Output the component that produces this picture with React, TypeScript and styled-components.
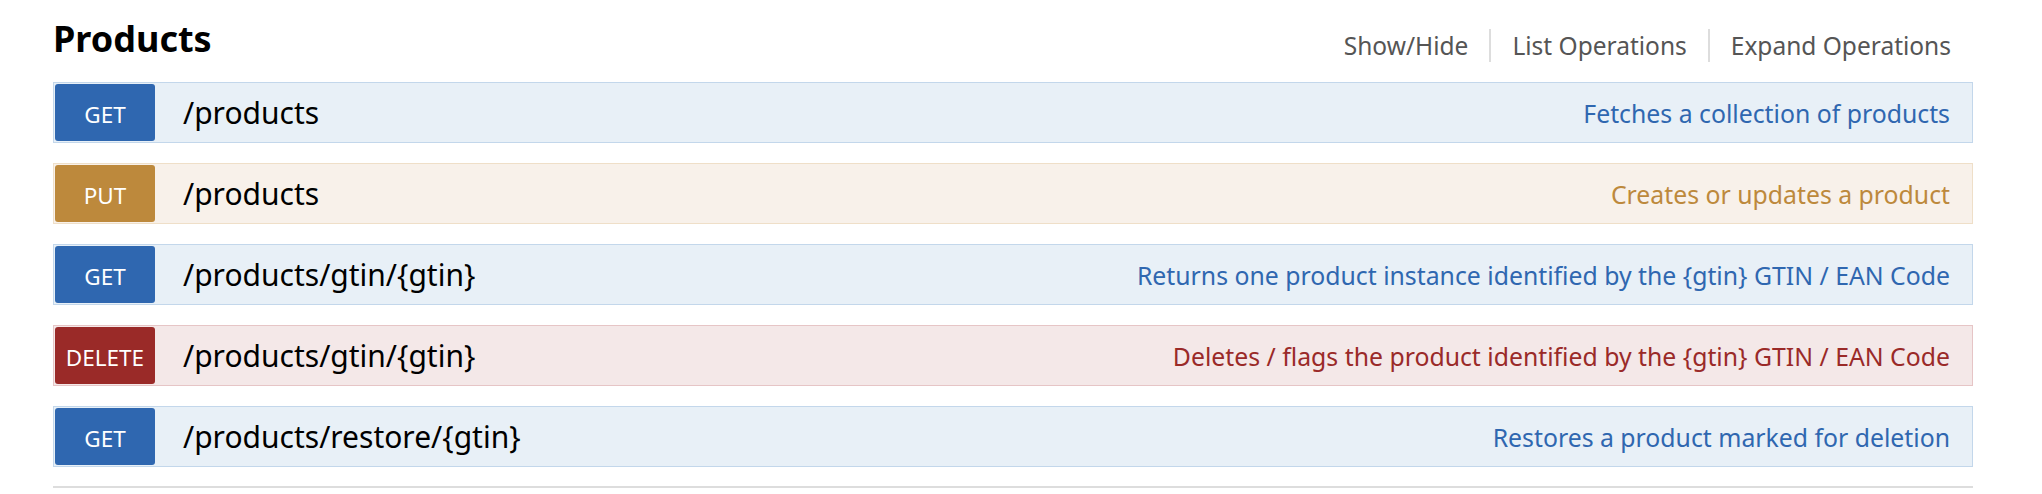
import React from 'react';
import styled, { createGlobalStyle } from 'styled-components';

type Method = 'get' | 'put' | 'delete';

const palette: Record<Method, { badge: string; bg: string; border: string; text: string }> = {
  get: { badge: '#2f67b0', bg: '#e8f0f7', border: '#c3d7eb', text: '#2f67b0' },
  put: { badge: '#bd893c', bg: '#f8f1ea', border: '#efdfc8', text: '#bd893c' },
  delete: { badge: '#9a2a28', bg: '#f4e8e8', border: '#e6c5c6', text: '#9a2a28' },
};

const operations: { method: Method; path: string; summary: string }[] = [
  { method: 'get', path: '/products', summary: 'Fetches a collection of products' },
  { method: 'put', path: '/products', summary: 'Creates or updates a product' },
  {
    method: 'get',
    path: '/products/gtin/{gtin}',
    summary: 'Returns one product instance identified by the {gtin} GTIN / EAN Code',
  },
  {
    method: 'delete',
    path: '/products/gtin/{gtin}',
    summary: 'Deletes / flags the product identified by the {gtin} GTIN / EAN Code',
  },
  { method: 'get', path: '/products/restore/{gtin}', summary: 'Restores a product marked for deletion' },
];

const GlobalStyle = createGlobalStyle`
  html, body {
    margin: 0;
    padding: 0;
    background: #ffffff;
    font-family: "Noto Sans", "Open Sans", sans-serif;
  }
`;

const Resource = styled.section`
  box-sizing: border-box;
  width: 1920px;
  margin-left: 53px;
  padding-top: 21px;
  padding-bottom: 19px;
  border-bottom: 2px solid #dddddd;
`;

const Heading = styled.div`
  display: flex;
  align-items: flex-start;
  justify-content: space-between;
  height: 41px;
  margin-bottom: 20px;
`;

const Title = styled.h2`
  margin: 0;
  font-size: 36px;
  line-height: 36px;
  font-weight: 700;
  color: #000000;
`;

const Options = styled.ul`
  list-style: none;
  margin: 8px 0 0;
  padding: 0 22px 0 0;
  display: flex;
`;

const Option = styled.li<{ $last?: boolean }>`
  padding: 0 21px;
  font-size: 24.5px;
  line-height: 33px;
  color: #555555;
  border-right: ${(p) => (p.$last ? 'none' : '2px solid #dddddd')};

  &:last-child {
    padding-right: 0;
  }
`;

const Operations = styled.ul`
  list-style: none;
  margin: 0;
  padding: 0;
  display: flex;
  flex-direction: column;
  gap: 20px;
`;

const Operation = styled.li<{ $method: Method }>`
  box-sizing: border-box;
  height: 61px;
  padding: 1px;
  display: flex;
  align-items: center;
  background: ${(p) => palette[p.$method].bg};
  border: 1px solid ${(p) => palette[p.$method].border};
`;

const Badge = styled.span<{ $method: Method }>`
  flex: none;
  box-sizing: border-box;
  width: 100px;
  height: 57px;
  padding-top: 3px;
  display: flex;
  align-items: center;
  justify-content: center;
  border-radius: 3px;
  background: ${(p) => palette[p.$method].badge};
  color: #ffffff;
  font-size: 22.5px;
  text-transform: uppercase;
`;

const Path = styled.span`
  margin-left: 28px;
  font-size: 30px;
  color: #000000;
  white-space: nowrap;
`;

const Summary = styled.span<{ $method: Method }>`
  flex: 1;
  text-align: right;
  padding-right: 21px;
  font-size: 24.8px;
  color: ${(p) => palette[p.$method].text};
  white-space: nowrap;
`;

function App() {
  return (
    <>
      <GlobalStyle />
      <Resource>
        <Heading>
          <Title>Products</Title>
          <Options>
            <Option>Show/Hide</Option>
            <Option>List Operations</Option>
            <Option $last>Expand Operations</Option>
          </Options>
        </Heading>
        <Operations>
          {operations.map((op, i) => (
            <Operation key={i} $method={op.method}>
              <Badge $method={op.method}>{op.method}</Badge>
              <Path>{op.path}</Path>
              <Summary $method={op.method}>{op.summary}</Summary>
            </Operation>
          ))}
        </Operations>
      </Resource>
    </>
  );
}

export default App;
